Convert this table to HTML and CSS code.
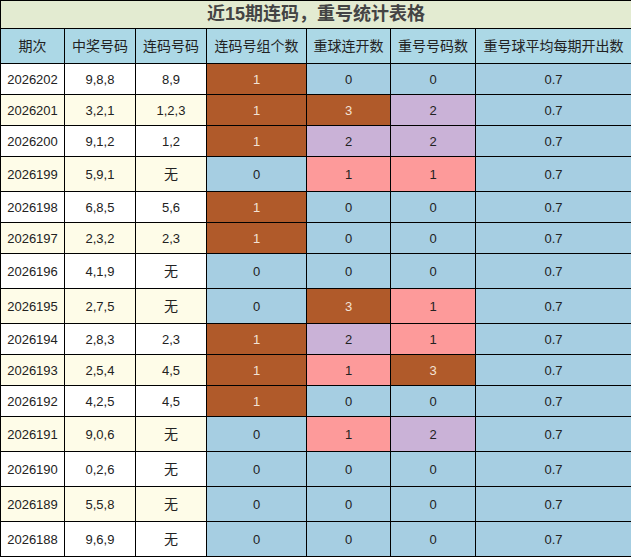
FILE: index.html
```html
<!DOCTYPE html>
<html lang="zh">
<head>
<meta charset="utf-8">
<title>近15期连码，重号统计表格</title>
<link rel="stylesheet" href="styles.css">
</head>
<body>
<table class="stats">
  <colgroup>
    <col class="c1"><col class="c2"><col class="c3"><col class="c4"><col class="c5"><col class="c6"><col class="c7">
  </colgroup>
  <thead>
    <tr><th colspan="7" class="title">近15期连码，重号统计表格</th></tr>
    <tr class="head">
      <th>期次</th><th>中奖号码</th><th>连码号码</th><th>连码号组个数</th><th>重球连开数</th><th>重号号码数</th><th>重号球平均每期开出数</th>
    </tr>
  </thead>
  <tbody>
    <tr class="even"><td>2026202</td><td>9,8,8</td><td>8,9</td><td class="brown">1</td><td class="blue">0</td><td class="blue">0</td><td class="blue">0.7</td></tr>
    <tr class="odd"><td>2026201</td><td>3,2,1</td><td>1,2,3</td><td class="brown">1</td><td class="brown">3</td><td class="purple">2</td><td class="blue">0.7</td></tr>
    <tr class="even"><td>2026200</td><td>9,1,2</td><td>1,2</td><td class="brown">1</td><td class="purple">2</td><td class="purple">2</td><td class="blue">0.7</td></tr>
    <tr class="odd tall"><td>2026199</td><td>5,9,1</td><td class="none">无</td><td class="blue">0</td><td class="pink">1</td><td class="pink">1</td><td class="blue">0.7</td></tr>
    <tr class="even"><td>2026198</td><td>6,8,5</td><td>5,6</td><td class="brown">1</td><td class="blue">0</td><td class="blue">0</td><td class="blue">0.7</td></tr>
    <tr class="odd"><td>2026197</td><td>2,3,2</td><td>2,3</td><td class="brown">1</td><td class="blue">0</td><td class="blue">0</td><td class="blue">0.7</td></tr>
    <tr class="even tall"><td>2026196</td><td>4,1,9</td><td class="none">无</td><td class="blue">0</td><td class="blue">0</td><td class="blue">0</td><td class="blue">0.7</td></tr>
    <tr class="odd tall"><td>2026195</td><td>2,7,5</td><td class="none">无</td><td class="blue">0</td><td class="brown">3</td><td class="pink">1</td><td class="blue">0.7</td></tr>
    <tr class="even"><td>2026194</td><td>2,8,3</td><td>2,3</td><td class="brown">1</td><td class="purple">2</td><td class="pink">1</td><td class="blue">0.7</td></tr>
    <tr class="odd"><td>2026193</td><td>2,5,4</td><td>4,5</td><td class="brown">1</td><td class="pink">1</td><td class="brown">3</td><td class="blue">0.7</td></tr>
    <tr class="even"><td>2026192</td><td>4,2,5</td><td>4,5</td><td class="brown">1</td><td class="blue">0</td><td class="blue">0</td><td class="blue">0.7</td></tr>
    <tr class="odd tall"><td>2026191</td><td>9,0,6</td><td class="none">无</td><td class="blue">0</td><td class="pink">1</td><td class="purple">2</td><td class="blue">0.7</td></tr>
    <tr class="even tall"><td>2026190</td><td>0,2,6</td><td class="none">无</td><td class="blue">0</td><td class="blue">0</td><td class="blue">0</td><td class="blue">0.7</td></tr>
    <tr class="odd tall"><td>2026189</td><td>5,5,8</td><td class="none">无</td><td class="blue">0</td><td class="blue">0</td><td class="blue">0</td><td class="blue">0.7</td></tr>
    <tr class="even tall"><td>2026188</td><td>9,6,9</td><td class="none">无</td><td class="blue">0</td><td class="blue">0</td><td class="blue">0</td><td class="blue">0.7</td></tr>
  </tbody>
</table>
</body>
</html>
```

FILE: styles.css
```css
html, body {
  margin: 0;
  padding: 0;
  background: #ffffff;
}

.stats {
  width: 631px;
  table-layout: fixed;
  border-collapse: collapse;
  font-family: "Liberation Sans", "Noto Sans CJK SC", sans-serif;
  color: #222;
}

.c1 { width: 64px; }
.c2 { width: 71px; }
.c3 { width: 71px; }
.c4 { width: 100px; }
.c5 { width: 84px; }
.c6 { width: 85px; }
.c7 { width: 156px; }

.stats th,
.stats td {
  border: 1px solid #000;
  text-align: center;
  white-space: nowrap;
}

.title {
  background: #e3ebd1;
  color: #444;
  font-size: 18px;
  font-weight: bold;
  padding: 0;
  line-height: 27px;
}

.head th {
  background: #acd8e6;
  font-weight: normal;
  font-size: 14px;
  line-height: 20px;
  padding: 7px 0;
  color: #222;
}

.stats td {
  font-size: 13px;
  line-height: 15px;
  padding: 8px 0 7px;
}

.stats .tall td {
  padding: 10px 0 9px;
}

.even td { background: #ffffff; }
.odd td { background: #fefce8; }

.stats td.none { font-size: 14px; }

.stats td.blue { background: #a6cee2; }
.stats td.brown { background: #b05a2a; color: #f3e2d6; }
.stats td.purple { background: #cab2d7; }
.stats td.pink { background: #fd9a9a; }
```
